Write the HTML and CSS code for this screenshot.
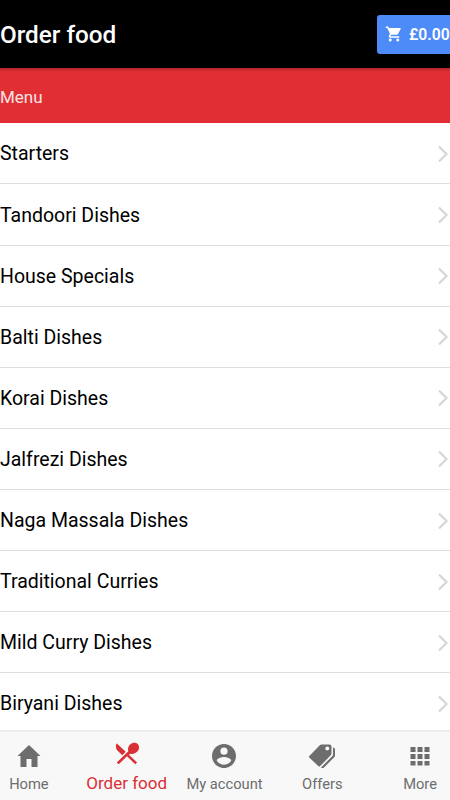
FILE: index.html
```
<!DOCTYPE html>
<html lang="en">
<head>
    <meta charset="UTF-8">
    <meta name="viewport" content="width=device-width, initial-scale=1.0">
    <title>Order food</title>
    <link rel="stylesheet" href="styles.css">
</head>
<body>
    <header class="toolbar">
        <h1>Order food</h1>
        <button class="cart">
            <svg viewBox="0 0 24 24"><path d="M7 18c-1.1 0-2 .9-2 2s.9 2 2 2 2-.9 2-2-.9-2-2-2zM1 2v2h2l3.600 7.600-1.350 2.450c-.16.28-.25.61-.25.950 0 1.100.9 2 2 2h12v-2H7.420c-.14 0-.25-.11-.25-.25l.03-.12.9-1.630h7.450c.75 0 1.410-.41 1.750-1.030l3.580-6.490A1 1 0 0 0 20 4H5.210l-.94-2H1zm16 16c-1.100 0-2 .9-2 2s.9 2 2 2 2-.9 2-2-.9-2-2-2z"/></svg>
            <span>£0.00</span>
        </button>
    </header>

    <div class="list-header">Menu</div>
    <main class="menu">
        <a class="item">Starters <svg viewBox="0 0 12 18"><path d="M2 1.500L9.500 9L2 16.500"/></svg></a>
        <a class="item">Tandoori Dishes <svg viewBox="0 0 12 18"><path d="M2 1.500L9.500 9L2 16.500"/></svg></a>
        <a class="item">House Specials <svg viewBox="0 0 12 18"><path d="M2 1.500L9.500 9L2 16.500"/></svg></a>
        <a class="item">Balti Dishes <svg viewBox="0 0 12 18"><path d="M2 1.500L9.500 9L2 16.500"/></svg></a>
        <a class="item">Korai Dishes <svg viewBox="0 0 12 18"><path d="M2 1.500L9.500 9L2 16.500"/></svg></a>
        <a class="item">Jalfrezi Dishes <svg viewBox="0 0 12 18"><path d="M2 1.500L9.500 9L2 16.500"/></svg></a>
        <a class="item">Naga Massala Dishes <svg viewBox="0 0 12 18"><path d="M2 1.500L9.500 9L2 16.500"/></svg></a>
        <a class="item">Traditional Curries <svg viewBox="0 0 12 18"><path d="M2 1.500L9.500 9L2 16.500"/></svg></a>
        <a class="item">Mild Curry Dishes <svg viewBox="0 0 12 18"><path d="M2 1.500L9.500 9L2 16.500"/></svg></a>
        <a class="item">Biryani Dishes <svg viewBox="0 0 12 18"><path d="M2 1.500L9.500 9L2 16.500"/></svg></a>
    </main>

    <nav class="tabs">
        <a class="tab">
            <svg viewBox="0 0 28 28"><path d="M14 3L2.500 14H5.500V25H11.500V17H16.500V25H22.500V14H25.500Z"/></svg>
            <span>Home</span>
        </a>
        <a class="tab active">
            <svg viewBox="0 0 28 28"><path d="M3.600 3.200L12.700 11.700L9.300 15.200L4.400 10.500Q1.800 7.300 3.600 3.200ZM17.400 13.700C19.400 14.500 22.300 13.600 24.300 11.600C26.400 9.400 26.700 6 24.700 4C22.700 2 19.200 2.400 17.100 4.600C15.200 6.500 14.600 9 15.300 11.200L3.800 22.400L5.700 24.300L14 16.200L22.300 24.300L24.100 22.500L15.900 14.800Z"/></svg>
            <span>Order food</span>
        </a>
        <a class="tab">
            <svg viewBox="0 0 28 28"><path d="M14 2C7.380 2 2 7.380 2 14s5.380 12 12 12 12-5.380 12-12S20.620 2 14 2zm0 3.600a3.600 3.600 0 1 1 0 7.200 3.600 3.600 0 0 1 0-7.200zm0 17.040c-3 0-5.650-1.540-7.200-3.860.04-2.390 4.800-3.700 7.200-3.700s7.160 1.310 7.200 3.700A8.640 8.640 0 0 1 14 22.640z"/></svg>
            <span>My account</span>
        </a>
        <a class="tab">
            <svg viewBox="0 0 28 28"><path fill-rule="evenodd" d="M13.500 2.500H21.500Q23.500 2.500 23.500 4.500V11.500Q23.500 12.500 22.700 13.300L12.200 24Q11.200 25 10.200 24L1.300 15.600Q.5 14.800 1.300 14L11.800 3.300Q12.600 2.500 13.500 2.500ZM19.300 4.500a2 2 0 1 0 0 4 2 2 0 0 0 0-4Z"/><path d="M25 5.500Q27 5.500 27 7.500V13.500Q27 14.500 26.200 15.300L16 25.500Q14.500 26.700 13 25.500L24.200 14.200Q25 13.400 25 12.400Z"/></svg>
            <span>Offers</span>
        </a>
        <a class="tab">
            <svg viewBox="0 0 28 28"><path d="M4.500 5h5v5h-5zM11.500 5h5v5h-5zM18.500 5h5v5h-5zM4.500 12h5v5h-5zM11.500 12h5v5h-5zM18.500 12h5v5h-5zM4.500 19h5v4.500h-5zM11.500 19h5v4.500h-5zM18.500 19h5v4.500h-5z"/></svg>
            <span>More</span>
        </a>
    </nav>
</body>
</html>
```
FILE: styles.css
```
* {
    box-sizing: border-box;
}
body {
    font-family: Roboto, sans-serif;
    background-color: #fff;
    margin: 0;
    height: 100vh;
    display: flex;
    flex-direction: column;
    overflow: hidden;
    color: #000;
}
.toolbar {
    background-color: #000;
    color: #fff;
    height: 68px;
    flex: none;
    display: flex;
    justify-content: space-between;
    align-items: center;
}
h1 {
    margin: 0;
    font-size: 24.3px;
    font-weight: 500;
}
.cart {
    width: 73px;
    height: 39px;
    padding: 0 0 0 8px;
    display: flex;
    align-items: center;
    gap: 6px;
    border: none;
    border-radius: 3px 0 0 3px;
    background-color: #4d8bf9;
    color: #fff;
    font-family: inherit;
    font-size: 15.7px;
    font-weight: 600;
}
.cart svg {
    width: 18px;
    height: 18px;
    flex: none;
    fill: #fff;
}
.list-header {
    flex: none;
    height: 55.4px;
    line-height: 58px;
    background: linear-gradient(#b5262b, #e02e33 4px);
    color: #fbe3e3;
    font-size: 17px;
}
.menu {
    flex: 1;
    min-height: 0;
    overflow: hidden;
}
.item {
    height: 61.1px;
    padding-top: 1px;
    display: flex;
    justify-content: space-between;
    align-items: center;
    border-bottom: 1.5px solid #dedede;
    font-size: 19.5px;
}
.item svg {
    width: 12px;
    height: 18px;
    margin-right: 1px;
    fill: none;
    stroke: #d6d6d6;
    stroke-width: 2.2;
}
/* the bar runs past both edges of the screen */
.tabs {
    flex: none;
    height: 70px;
    margin: 0 -19px 0 -20px;
    display: flex;
    border-top: 2px solid #ececec;
    background-color: #f8f8f8;
}
.tab {
    flex: 1 1 0;
    min-width: 0;
    display: flex;
    flex-direction: column;
    align-items: center;
    padding-top: 10px;
    color: #6d6d6d;
    font-size: 14.7px;
}
.tab svg {
    width: 28px;
    height: 28px;
    fill: currentColor;
}
.tab span {
    line-height: 20px;
    margin-top: 4px;
    white-space: nowrap;
}
.tab.active {
    padding-top: 8px;
    color: #d93036;
    font-size: 17px;
}
.tab.active span {
    margin-top: 5px;
}
```
